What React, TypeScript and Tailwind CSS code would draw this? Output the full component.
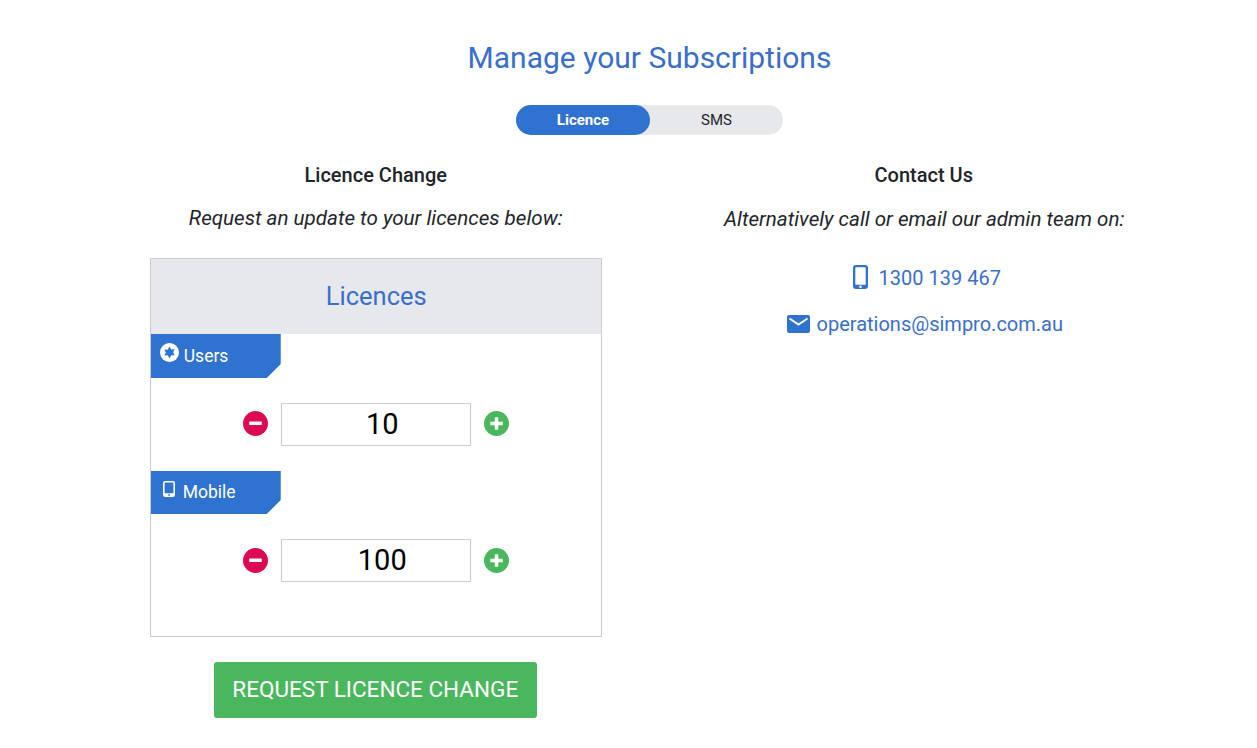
const BLUE = '#3072cf'

function MinusButton({ className }: { className: string }) {
  return (
    <svg width="25" height="25" viewBox="0 0 26 26" className={`shrink-0 ${className}`}>
      <circle cx="13" cy="13" r="13" fill="#dc0a52" />
      <rect x="6.5" y="11" width="13" height="3.6" rx="0.6" fill="#fff" />
    </svg>
  )
}

function PlusButton({ className }: { className: string }) {
  return (
    <svg width="25" height="25" viewBox="0 0 26 26" className={`shrink-0 ${className}`}>
      <circle cx="13" cy="13" r="13" fill="#4ab75e" />
      <path d="M11.2 6.5h3.6v4.7h4.7v3.6h-4.7v4.7h-3.6v-4.7H6.5v-3.6h4.7z" fill="#fff" />
    </svg>
  )
}

function StarCircle() {
  return (
    <svg width="19" height="19" viewBox="0 0 20 20" className="shrink-0 mt-[9px]">
      <circle cx="10" cy="10" r="10" fill="#fff" />
      <path
        d="M10 3.8l1.9 3 3.5-.2-1.5 3.2 1.5 3.1-3.5-.1L10 16l-1.900-3-3.500.100 1.500-3.100-1.500-3.200 3.500.200z"
        fill={BLUE}
      />
    </svg>
  )
}

function PhoneOutline() {
  return (
    <svg width="12" height="16" viewBox="0 0 12 16" className="shrink-0 mt-[10px]">
      <path
        fillRule="evenodd"
        d="M2.200 0h7.600A2.200 2.200 0 0 1 12 2.200v11.600a2.200 2.200 0 0 1-2.200 2.200H2.200A2.200 2.200 0 0 1 0 13.800V2.200A2.200 2.200 0 0 1 2.200 0zM1.600 2.200v10h8.800v-10a.6.6 0 0 0-.6-.6H2.200a.6.6 0 0 0-.6.6zM6 13a.9.9 0 1 0 0 1.800A.9.9 0 0 0 6 13z"
        fill="#fff"
      />
    </svg>
  )
}

function PhoneSolid() {
  return (
    <svg width="15" height="24" viewBox="0 0 15 24" className="shrink-0">
      <path
        fillRule="evenodd"
        d="M3 0h9a3 3 0 0 1 3 3v18a3 3 0 0 1-3 3H3a3 3 0 0 1-3-3V3a3 3 0 0 1 3-3zM2.300 3v16.800h10.400V3a.8.8 0 0 0-.8-.8H3.100a.8.8 0 0 0-.8.8zM7.500 20.400a1.300 1.300 0 1 0 0 2.600 1.300 1.300 0 0 0 0-2.600z"
        fill={BLUE}
      />
    </svg>
  )
}

function MailSolid() {
  return (
    <svg width="23" height="18" viewBox="0 0 23 18" className="shrink-0">
      <rect width="23" height="18" rx="2" fill={BLUE} />
      <path d="M2.500 3.500l9 6 9-6" fill="none" stroke="#fff" strokeWidth="2" />
    </svg>
  )
}

function LicenceRow({ value, lower }: { value: string; lower?: boolean }) {
  const iconClass = lower ? 'mt-[1px] mb-[1px]' : 'mb-[2px]'
  return (
    <div className="flex items-center">
      <div className="w-[130px] flex justify-end pr-[13px]">
        <MinusButton className={iconClass} />
      </div>
      <div
        className={`w-[190px] h-[43px] border border-[#cccccc] pl-[13px] flex items-center justify-center text-[29px] text-black ${
          lower ? 'pt-[1px]' : ''
        }`}
      >
        {value}
      </div>
      <div className="pl-[13px]">
        <PlusButton className={iconClass} />
      </div>
    </div>
  )
}

function Tag({ children, height }: { children: React.ReactNode; height: string }) {
  return (
    <div
      className={`w-[130px] ${height} bg-[#3072cf] text-white text-[17.500px] flex items-start [clip-path:polygon(0_0,100%_0,100%_calc(100%-14px),calc(100%-14px)_100%,0_100%)]`}
    >
      {children}
    </div>
  )
}

export default function App() {
  return (
    <div className="w-[1257px] h-[748px] bg-white overflow-hidden pl-[102px] pr-[60px] pt-[38px] font-['Roboto',sans-serif] text-[#212529]">
      <h1 className="text-center text-[30px] leading-[39px] text-[#3a6ecb]">Manage your Subscriptions</h1>

      <div className="mt-[28px] mx-auto w-[267px] h-[30px] rounded-full bg-[#e7e8ec] flex text-[15px]">
        <div className="w-[134px] rounded-full bg-[#3072cf] text-white font-bold flex items-center justify-center">
          Licence
        </div>
        <div className="w-[133px] flex items-center justify-center">SMS</div>
      </div>

      <div className="flex mt-[28px]">
        <div className="w-[548px] flex flex-col items-center">
          <h2 className="text-[20px] leading-[24px] font-medium">Licence Change</h2>
          <p className="mt-[19px] text-[20.600px] leading-[24px] italic">Request an update to your licences below:</p>

          <div className="mt-[28px] w-[452px] h-[379px] border border-[#cccccc]">
            <div className="h-[75px] bg-[#e7e8ec] pl-[1px] flex items-center justify-center text-[25.500px] text-[#3a6ecb]">
              Licences
            </div>
            <Tag height="h-[44px]">
              <div className="flex items-start gap-[5px] pl-[9px]">
                <StarCircle />
                <span className="leading-[28px] mt-[8px]">Users</span>
              </div>
            </Tag>
            <div className="mt-[25px]">
              <LicenceRow value="10" />
            </div>
            <div className="mt-[25px]">
              <Tag height="h-[43px]">
                <div className="flex items-start gap-[8px] pl-[12px]">
                  <PhoneOutline />
                  <span className="leading-[28px] mt-[7px]">Mobile</span>
                </div>
              </Tag>
            </div>
            <div className="mt-[25px]">
              <LicenceRow value="100" lower />
            </div>
          </div>

          <button className="mt-[25px] mr-[1px] w-[323px] h-[56px] rounded-[3px] bg-[#4ab75e] text-white text-[22.500px]">
            REQUEST LICENCE CHANGE
          </button>
        </div>

        <div className="w-[548px] flex flex-col items-center">
          <h2 className="pl-[1px] text-[20px] leading-[24px] font-medium">Contact Us</h2>
          <p className="mt-[20px] pl-[2px] text-[20.600px] leading-[24px] italic">Alternatively call or email our admin team on:</p>
          <div className="mt-[32px] pl-[7px] flex items-center gap-[11px] text-[20px] leading-[24px] text-[#3a6ecb]">
            <PhoneSolid />
            <span className="mt-[3px]">1300 139 467</span>
          </div>
          <div className="mt-[22px] pl-[3px] flex items-center gap-[7px] text-[20px] leading-[24px] text-[#3a6ecb]">
            <MailSolid />
            <span>operations@simpro.com.au</span>
          </div>
        </div>
      </div>
    </div>
  )
}
